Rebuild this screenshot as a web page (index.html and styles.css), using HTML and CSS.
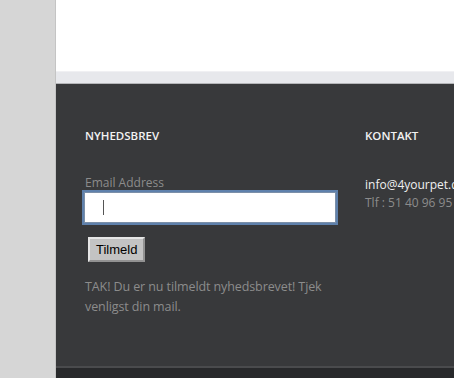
FILE: index.html
```html
<!DOCTYPE html>
<html lang="da">
<head>
  <meta charset="UTF-8">
  <meta name="viewport" content="width=device-width, initial-scale=1.0">
  <title>4yourpet</title>
  <link rel="stylesheet" href="styles.css">
</head>
<body>
  <div class="sidebar"></div>
  <div class="page">
    <div class="content"></div>
    <div class="strip"></div>
    <footer class="footer">
      <div class="col newsletter">
        <h4>Nyhedsbrev</h4>
        <label for="email">Email Address</label>
        <div class="field">
          <input type="text" id="email" class="email">
          <span class="caret"></span>
        </div>
        <button class="submit">Tilmeld</button>
        <p class="thanks">TAK! Du er nu tilmeldt nyhedsbrevet! Tjek venligst din mail.</p>
      </div>
      <div class="col contact">
        <h4>Kontakt</h4>
        <p class="mail">info@4yourpet.dk</p>
        <p class="phone">Tlf : 51 40 96 95</p>
      </div>
    </footer>
    <div class="bottom"></div>
  </div>
</body>
</html>
```

FILE: styles.css
```css
body {
  margin: 0;
  display: flex;
  height: 378px;
  overflow: hidden;
  font-family: "Open Sans", sans-serif;
  background-color: #d6d6d6;
}
.sidebar {
  width: 55px;
  flex-shrink: 0;
  background-color: #d6d6d6;
}
.page {
  flex: 1;
  display: flex;
  flex-direction: column;
  min-width: 0;
  border-left: 1px solid #c4c4c4;
}
.content {
  height: 71px;
  background-color: #ffffff;
}
.strip {
  height: 11px;
  background-color: #e7e8ec;
  border-top: 1px solid #f0f0f3;
  border-bottom: 1px solid #b5b6b9;
}
.footer {
  height: 282px;
  background-color: #38393b;
  border-bottom: 2px solid #4a4b4d;
  display: flex;
  padding: 0 0 0 29px;
  overflow: hidden;
}
.bottom {
  flex: 1;
  background-color: #28292b;
}
.col {
  flex-shrink: 0;
}
.newsletter {
  width: 280px;
}
.contact {
  width: 120px;
  white-space: nowrap;
}
h4 {
  margin: 44px 0 0;
  font-size: 11.5px;
  font-weight: 600;
  text-transform: uppercase;
  color: #f2f2f2;
  letter-spacing: 0;
}
label {
  display: block;
  margin-top: 33px;
  font-size: 12px;
  color: #8c8c8c;
  line-height: 14px;
}
.field {
  position: relative;
  width: 252px;
  margin: 2px 0 0 -1px;
}
.email {
  display: block;
  box-sizing: border-box;
  width: 252px;
  height: 31px;
  border: 1px solid #7b8fa8;
  outline: 2px solid #5f81ac;
  background: #ffffff;
  font-size: 13px;
  padding: 0 0 0 18px;
}
.caret {
  position: absolute;
  left: 19px;
  top: 8px;
  width: 1px;
  height: 15px;
  background-color: #555;
}
.submit {
  display: block;
  margin: 14px 0 0 3px;
  height: 25px;
  padding: 0 6px;
  background-color: #c3c3c3;
  border: 2px outset #e6e6e6;
  font-family: "Liberation Sans", Arial, sans-serif;
  font-size: 13px;
  font-weight: normal;
  color: #000;
}
.thanks {
  width: 240px;
  margin: 15px 0 0;
  font-size: 12.5px;
  line-height: 20px;
  color: #8c8c8c;
  letter-spacing: -0.1px;
}
.contact p {
  margin: 0;
  font-size: 12px;
  line-height: 18px;
}
.mail {
  margin-top: 33px !important;
  color: #f0f0f0;
}
.phone {
  color: #8c8c8c;
}
```
